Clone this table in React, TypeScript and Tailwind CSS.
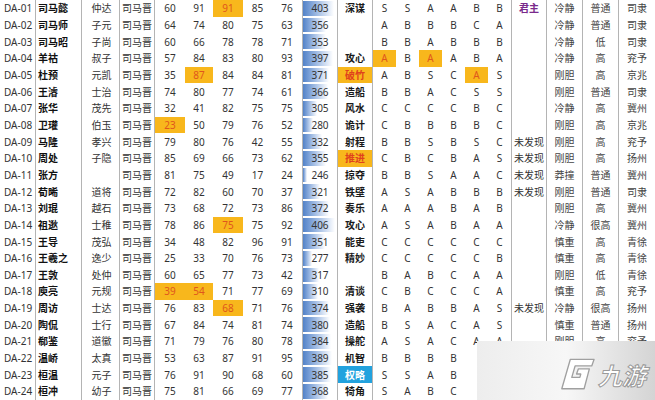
type R = {
  id: string;
  name: string;
  zi: string;
  n: number[];
  total: number;
  skill: string;
  g: string;
  lord: string;
  xg: string;
  yl: string;
  cs: string;
  hl?: string[];
};

// rows 22-24: right part lies under the watermark, left blank there
const rows: R[] = [
  { id: "DA-01", name: "司马懿", zi: "仲达", n: [60, 91, 91, 85, 76], total: 403, skill: "深谋", g: "SSAABB", lord: "君主", xg: "冷静", yl: "普通", cs: "司隶", hl: ["n2"] },
  { id: "DA-02", name: "司马师", zi: "子元", n: [64, 74, 80, 75, 63], total: 356, skill: "", g: "ABBBCA", lord: "", xg: "冷静", yl: "普通", cs: "司隶" },
  { id: "DA-03", name: "司马昭", zi: "子尚", n: [60, 66, 78, 78, 71], total: 353, skill: "", g: "BBABBB", lord: "", xg: "冷静", yl: "低", cs: "司隶" },
  { id: "DA-04", name: "羊祜", zi: "叔子", n: [57, 84, 83, 80, 93], total: 397, skill: "攻心", g: "ABAABA", lord: "", xg: "冷静", yl: "高", cs: "兖予", hl: ["g0", "g2"] },
  { id: "DA-05", name: "杜预", zi: "元凯", n: [35, 87, 84, 84, 81], total: 371, skill: "破竹", g: "ABSCAS", lord: "", xg: "刚胆", yl: "高", cs: "京兆", hl: ["n1", "skill", "g4"] },
  { id: "DA-06", name: "王濬", zi: "士治", n: [74, 80, 77, 74, 61], total: 366, skill: "造船", g: "BBACSS", lord: "", xg: "刚胆", yl: "普通", cs: "司隶" },
  { id: "DA-07", name: "张华", zi: "茂先", n: [32, 41, 82, 75, 75], total: 305, skill: "风水", g: "CCCCBC", lord: "", xg: "冷静", yl: "高", cs: "冀州" },
  { id: "DA-08", name: "卫瓘", zi: "伯玉", n: [23, 50, 79, 76, 52], total: 280, skill: "诡计", g: "CBBBBC", lord: "", xg: "刚胆", yl: "高", cs: "京兆", hl: ["n0"] },
  { id: "DA-09", name: "马隆", zi: "孝兴", n: [79, 80, 76, 42, 55], total: 332, skill: "射程", g: "BBSBSC", lord: "未发现", xg: "刚胆", yl: "高", cs: "兖予" },
  { id: "DA-10", name: "周处", zi: "子隐", n: [85, 69, 66, 73, 62], total: 355, skill: "推进", g: "CBCBAS", lord: "未发现", xg: "刚胆", yl: "高", cs: "扬州", hl: ["skill"] },
  { id: "DA-11", name: "张方", zi: "", n: [81, 75, 49, 17, 24], total: 246, skill: "掠夺", g: "BBSAAC", lord: "未发现", xg: "莽撞", yl: "普通", cs: "冀州" },
  { id: "DA-12", name: "荀晞", zi: "道将", n: [72, 82, 60, 70, 37], total: 321, skill: "铁壁", g: "ASABBB", lord: "未发现", xg: "刚胆", yl: "普通", cs: "司隶" },
  { id: "DA-13", name: "刘琨", zi: "越石", n: [73, 68, 72, 73, 86], total: 372, skill: "奏乐", g: "AAABAB", lord: "", xg: "刚胆", yl: "高", cs: "冀州" },
  { id: "DA-14", name: "祖逖", zi: "士稚", n: [78, 86, 75, 75, 92], total: 406, skill: "攻心", g: "ASABAA", lord: "", xg: "冷静", yl: "很高", cs: "冀州", hl: ["n2"] },
  { id: "DA-15", name: "王导", zi: "茂弘", n: [34, 48, 82, 96, 91], total: 351, skill: "能吏", g: "CCCCCC", lord: "", xg: "慎重", yl: "高", cs: "青徐" },
  { id: "DA-16", name: "王羲之", zi: "逸少", n: [25, 33, 70, 76, 73], total: 277, skill: "精妙", g: "CCCCCB", lord: "", xg: "慎重", yl: "高", cs: "青徐" },
  { id: "DA-17", name: "王敦", zi: "处仲", n: [60, 65, 77, 73, 42], total: 317, skill: "", g: "BABCAA", lord: "", xg: "刚胆", yl: "低", cs: "青徐" },
  { id: "DA-18", name: "庾亮", zi: "元规", n: [39, 54, 71, 77, 69], total: 310, skill: "清谈", g: "CBCCCA", lord: "", xg: "慎重", yl: "高", cs: "兖予", hl: ["n0", "n1"] },
  { id: "DA-19", name: "周访", zi: "士达", n: [76, 83, 68, 71, 76], total: 374, skill: "强袭", g: "BABBAS", lord: "未发现", xg: "冷静", yl: "很高", cs: "扬州", hl: ["n2"] },
  { id: "DA-20", name: "陶侃", zi: "士行", n: [67, 84, 74, 81, 74], total: 380, skill: "造船", g: "BSACAS", lord: "", xg: "慎重", yl: "普通", cs: "扬州" },
  { id: "DA-21", name: "郗鉴", zi: "道徽", n: [71, 79, 76, 80, 78], total: 384, skill: "操舵", g: "ASACAA", lord: "", xg: "刚胆", yl: "高", cs: "兖予" },
  { id: "DA-22", name: "温峤", zi: "太真", n: [53, 63, 87, 91, 95], total: 389, skill: "机智", g: "BBBB  ", lord: "", xg: "", yl: "", cs: "" },
  { id: "DA-23", name: "桓温", zi: "元子", n: [76, 91, 90, 68, 60], total: 385, skill: "权略", g: "SSAB  ", lord: "", xg: "", yl: "", cs: "", hl: ["blue"] },
  { id: "DA-24", name: "桓冲", zi: "幼子", n: [75, 81, 66, 69, 77], total: 368, skill: "犄角", g: "SABC  ", lord: "", xg: "", yl: "", cs: "" },
];

const numW = ["w-[30px]", "w-[28px]", "w-[30px]", "w-[29px]", "w-[31px] border-r border-[#b4b4b4]"];
const gradeW = ["w-[23px]", "w-[23px]", "w-[23px]", "w-[23px]", "w-[23px]", "w-[24px] border-r border-[#b4b4b4]"];
const HL = "bg-[#f8b71c] text-[#e0561c]";

function Row({ r }: { r: R }) {
  const hl = (k: string) => (r.hl ?? []).includes(k);
  const barW = 4 + ((r.total - 246) / (406 - 246)) * 28;
  const skillCls = hl("skill")
    ? "bg-[#f8b71c] text-[#e0421c]"
    : hl("blue")
      ? "bg-[#22a2de] text-white"
      : "text-[#1a1a1a]";

  return (
    <div className="flex h-[16.66px]">
      <div className="w-[36px] flex items-center pl-[4px] border-r border-[#b4b4b4] text-[#333]">{r.id}</div>
      <div className="w-[46px] flex items-center pl-[2px] border-r border-[#b4b4b4] font-bold text-[#111]">{r.name}</div>
      <div className="w-[38px] flex items-center justify-center pl-[2px] border-r border-[#b4b4b4] text-[#333]">{r.zi}</div>
      <div className="w-[35px] flex items-center justify-center border-r border-[#b4b4b4] text-[#333]">司马晋</div>
      {r.n.map((v, i) => (
        <div
          key={i}
          className={`${numW[i]} flex items-center justify-center ${hl("n" + i) ? HL : "text-[#333]"}`}
        >
          {v}
        </div>
      ))}
      <div className="relative w-[35px] flex items-center justify-center border-r border-[#b4b4b4] text-[#333]">
        <div
          className="absolute left-0 top-[1px] bottom-[1px] bg-linear-to-r from-[#5282c8] to-white"
          style={{ width: barW }}
        />
        <span className="relative">{r.total}</span>
      </div>
      <div className={`w-[35px] flex items-center justify-center border-r border-[#b4b4b4] font-bold ${skillCls}`}>
        {r.skill}
      </div>
      {r.g.split("").map((c, i) => (
        <div
          key={i}
          className={`${gradeW[i]} flex items-center justify-center ${hl("g" + i) ? HL : "text-[#333]"}`}
        >
          {c.trim()}
        </div>
      ))}
      <div
        className={`w-[35px] flex items-center justify-center border-r border-[#b4b4b4] ${
          r.lord === "君主" ? "font-bold text-[#7a2a8c]" : "text-[#333]"
        }`}
      >
        {r.lord}
      </div>
      <div className="w-[36px] flex items-center justify-center border-r border-[#b4b4b4] text-[#444]">{r.xg}</div>
      <div className="w-[36px] flex items-center justify-center border-r border-[#b4b4b4] text-[#444]">{r.yl}</div>
      <div className="w-[36px] flex items-center justify-center text-[#444]">{r.cs}</div>
    </div>
  );
}

function Watermark() {
  return (
    <div className="absolute left-[477px] top-[341px] w-[178px] h-[59px] bg-linear-to-r from-[#ededed] via-[#f7f7f7] to-[#d4d4d4] flex items-center justify-end pr-[9px] pt-[8px] gap-[2px]">
      <svg width="38" height="35" viewBox="0 0 40 36">
        <path
          d="M13 2 H38 L35.5 9 H18 L14.5 21 H23 L24 17.5 H19.5 L21.5 12 H33 L27.5 33 H4 Z"
          fill="#ffffff"
          stroke="#a0a0a0"
          strokeWidth="1.4"
          strokeLinejoin="round"
        />
      </svg>
      <span className="text-[24px] leading-none italic font-bold text-white [-webkit-text-stroke:1px_#9a9a9a] [font-family:'Noto_Sans_CJK_SC',sans-serif]">
        九游
      </span>
    </div>
  );
}

export default function App() {
  return (
    <div className="relative w-[655px] h-[400px] overflow-hidden bg-white text-[10px] leading-none [font-family:'Noto_Sans','Noto_Sans_CJK_SC',sans-serif]">
      {rows.map((r) => (
        <Row key={r.id} r={r} />
      ))}
      <Watermark />
    </div>
  );
}
